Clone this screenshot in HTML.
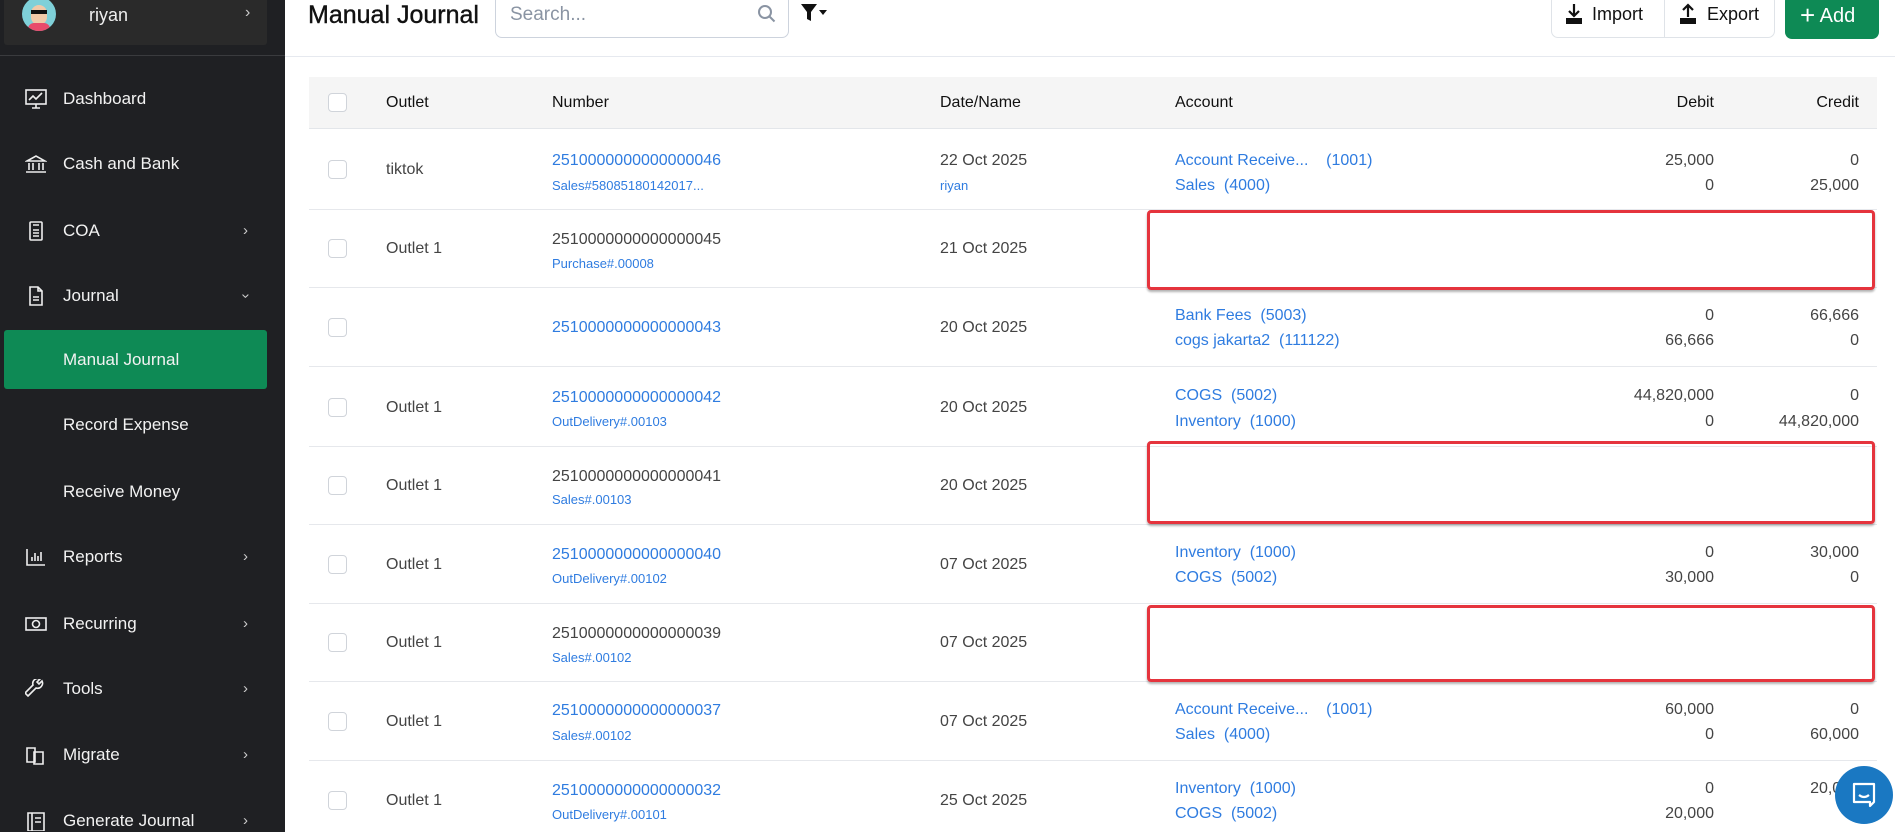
<!DOCTYPE html>
<html><head><meta charset="utf-8"><style>
*{box-sizing:border-box;margin:0;padding:0}
body{width:1895px;height:832px;overflow:hidden;background:#fff;font-family:"Liberation Sans",sans-serif;position:relative}
.sb{position:absolute;left:0;top:0;width:285px;height:832px;background:#1f2023;overflow:hidden}
.user{position:absolute;left:4px;top:0;width:263px;height:45px;background:#2a2a2a;border-radius:0 0 3px 3px}
.av{position:absolute;left:18px;top:-3px;width:34px;height:34px;border-radius:50%;background:#7fd0d8;overflow:hidden}
.divd{position:absolute;left:0;top:55px;width:285px;height:1px;background:#3a3b3e}
.mi{position:absolute;left:0;width:285px;height:30px;color:#f2f2f2;font-size:17px;line-height:30px}
.mi .t{position:absolute;left:63px}
.mi .ic{position:absolute;left:25px;top:5px;width:22px;height:20px}
.mi .ch{position:absolute;left:243px;top:0;font-size:15px;color:#ccc}
.act{position:absolute;left:4px;top:330px;width:263px;height:59px;background:#0e8a55;border-radius:3px}
.abs{position:absolute}
.row{position:absolute;left:309px;width:1568px;border-bottom:1px solid #e6e8ec}
.cb{position:absolute;left:28px;width:19px;height:19px;border:1.5px solid #d0d4da;border-radius:4px;background:#fff}
.c{position:absolute;font-size:16px;color:#444;white-space:nowrap;transform:translateY(3px)}
.l{color:#2f7ce0}
.s{font-size:13px}
.r{text-align:right}
.red{position:absolute;left:1147px;width:728px;border:3px solid #e5343d;border-radius:4px;box-shadow:0 2px 2px rgba(0,0,0,.3)}
</style></head><body>
<div class="sb">
 <div class="user"><div class="av"><div style="position:absolute;left:9px;top:8px;width:16px;height:20px;border-radius:8px;background:#f1c9a8"></div><div style="position:absolute;left:9px;top:13px;width:16px;height:4px;background:#111"></div><div style="position:absolute;left:6px;top:26px;width:22px;height:10px;background:#e84a6b;border-radius:6px 6px 0 0"></div></div>
 <div class="abs" style="left:85px;top:5px;color:#eee;font-size:18px">riyan</div>
 <div class="abs" style="left:241px;top:4px;color:#ccc;font-size:16px">›</div></div>
 <div class="divd"></div>
 <div class="mi" style="top:84px"><svg class="ic" viewBox="0 0 22 20" fill="none" stroke="#eee" stroke-width="1.6"><rect x="1" y="1" width="20" height="14"/><path d="M4 11l4-4 3 3 6-6M7 19h8M11 15v4"/></svg><span class="t">Dashboard</span></div>
 <div class="mi" style="top:149px"><svg class="ic" viewBox="0 0 22 20" fill="none" stroke="#eee" stroke-width="1.6"><path d="M2 7L11 2l9 5zM4 9v7M8 9v7M14 9v7M18 9v7M1 18h20"/></svg><span class="t">Cash and Bank</span></div>
 <div class="mi" style="top:216px"><svg class="ic" viewBox="0 0 22 20" fill="none" stroke="#eee" stroke-width="1.6"><rect x="5" y="1" width="12" height="18" rx="1"/><path d="M8 4h6M8 9h6M8 12h6M8 15h6"/></svg><span class="t">COA</span><span class="ch">›</span></div>
 <div class="mi" style="top:281px"><svg class="ic" viewBox="0 0 22 20" fill="none" stroke="#eee" stroke-width="1.6"><path d="M5 1h8l4 4v14H5zM13 1v4h4M8 11h6M8 14h6"/></svg><span class="t">Journal</span><span class="ch" style="transform:rotate(90deg)">›</span></div>
 <div class="act"></div>
 <div class="mi" style="top:345px"><span class="t">Manual Journal</span></div>
 <div class="mi" style="top:410px"><span class="t">Record Expense</span></div>
 <div class="mi" style="top:477px"><span class="t">Receive Money</span></div>
 <div class="mi" style="top:542px"><svg class="ic" viewBox="0 0 22 20" fill="none" stroke="#eee" stroke-width="1.6"><path d="M2 2v16h18M7 14v-4M10 14V6M13 14v-5M16 14V5"/></svg><span class="t">Reports</span><span class="ch">›</span></div>
 <div class="mi" style="top:609px"><svg class="ic" viewBox="0 0 22 20" fill="none" stroke="#eee" stroke-width="1.6"><rect x="1" y="4" width="20" height="12"/><circle cx="11" cy="10" r="3.5"/></svg><span class="t">Recurring</span><span class="ch">›</span></div>
 <div class="mi" style="top:674px"><svg class="ic" viewBox="0 0 22 20" fill="none" stroke="#eee" stroke-width="1.6"><path d="M3 17l8-8a5 5 0 006-7l-3 3-2-2 3-3a5 5 0 00-7 6l-8 8z"/></svg><span class="t">Tools</span><span class="ch">›</span></div>
 <div class="mi" style="top:740px"><svg class="ic" viewBox="0 0 22 20" fill="none" stroke="#eee" stroke-width="1.6"><path d="M2 3h8v14H2zM9 7h9v12H9z"/></svg><span class="t">Migrate</span><span class="ch">›</span></div>
 <div class="mi" style="top:806px"><svg class="ic" viewBox="0 0 22 20" fill="none" stroke="#eee" stroke-width="1.6"><path d="M3 2h16v18H3zM7 2v18M10 7h6M10 11h6"/></svg><span class="t">Generate Journal</span><span class="ch">›</span></div>
</div>

<div class="abs" style="left:308px;top:1px;font-size:25px;color:#111;-webkit-text-stroke:0.4px #111">Manual Journal</div>
<div class="abs" style="left:495px;top:-6px;width:294px;height:44px;border:1px solid #cdd3dd;border-radius:7px"></div>
<div class="abs" style="left:510px;top:4px;font-size:19px;color:#8a94a3">Search...</div>
<svg class="abs" style="left:757px;top:4px" width="20" height="20" viewBox="0 0 20 20" fill="none" stroke="#8a94a3" stroke-width="2"><circle cx="8" cy="8" r="6"/><path d="M12.5 12.5l5 5"/></svg>
<svg class="abs" style="left:801px;top:4px" width="30" height="18" viewBox="0 0 30 18"><path d="M0 0h16l-6 8v9l-4-2V8z" fill="#111"/><path d="M18 6h8l-4 5z" fill="#111"/></svg>
<div class="abs" style="left:1551px;top:-6px;width:224px;height:44px;border:1px solid #dfe3e8;border-radius:7px"></div>
<div class="abs" style="left:1664px;top:-6px;width:1px;height:44px;background:#dfe3e8"></div>
<svg class="abs" style="left:1565px;top:3px" width="18" height="22" viewBox="0 0 18 22"><path d="M9 1v12M4 8l5 5 5-5" stroke="#111" stroke-width="2.2" fill="none"/><path d="M1 15h16v6H1z" fill="#111"/></svg>
<div class="abs" style="left:1592px;top:4px;font-size:18px;color:#111">Import</div>
<svg class="abs" style="left:1679px;top:3px" width="18" height="22" viewBox="0 0 18 22"><path d="M9 14V2M4 7l5-5 5 5" stroke="#111" stroke-width="2.2" fill="none"/><path d="M1 15h16v6H1z" fill="#111"/></svg>
<div class="abs" style="left:1707px;top:4px;font-size:18px;color:#111">Export</div>
<div class="abs" style="left:1785px;top:-6px;width:94px;height:45px;background:#0e8a55;border-radius:7px;color:#fff;font-size:20px;line-height:42px;padding-left:15px"><span style="font-size:26px;vertical-align:-2px">+</span> Add</div>
<div class="abs" style="left:285px;top:56px;width:1610px;height:1px;background:#e6e9ef"></div>

<div class="abs" style="left:309px;top:77px;width:1568px;height:52px;background:#f5f5f5;border-bottom:1px solid #e3e6ea"></div>
<div class="cb" style="left:328px;top:93px"></div>
<div class="c" style="left:386px;top:91px;color:#111">Outlet</div>
<div class="c" style="left:552px;top:91px;color:#111">Number</div>
<div class="c" style="left:940px;top:91px;color:#111">Date/Name</div>
<div class="c" style="left:1175px;top:91px;color:#111">Account</div>
<div class="c r" style="left:1614px;width:100px;top:91px;color:#111">Debit</div>
<div class="c r" style="left:1759px;width:100px;top:91px;color:#111">Credit</div>

<div class="row" style="top:129px;height:81px"></div>
<div class="row" style="top:210px;height:78px"></div>
<div class="row" style="top:288px;height:79px"></div>
<div class="row" style="top:367px;height:80px"></div>
<div class="row" style="top:447px;height:78px"></div>
<div class="row" style="top:525px;height:79px"></div>
<div class="row" style="top:604px;height:78px"></div>
<div class="row" style="top:682px;height:79px"></div>

<div class="cb" style="left:328px;top:160px"></div>
<div class="c" style="left:386px;top:158px">tiktok</div>
<div class="c l" style="left:552px;top:149px">2510000000000000046</div>
<div class="c l s" style="left:552px;top:175px">Sales#58085180142017...</div>
<div class="c" style="left:940px;top:149px">22 Oct 2025</div>
<div class="c l s" style="left:940px;top:175px">riyan</div>
<div class="c l" style="left:1175px;top:149px">Account Receive...&nbsp;&nbsp;&nbsp;&nbsp;(1001)</div>
<div class="c l" style="left:1175px;top:174px">Sales&nbsp;&nbsp;(4000)</div>
<div class="c r" style="left:1564px;width:150px;top:149px">25,000</div>
<div class="c r" style="left:1564px;width:150px;top:174px">0</div>
<div class="c r" style="left:1709px;width:150px;top:149px">0</div>
<div class="c r" style="left:1709px;width:150px;top:174px">25,000</div>

<div class="cb" style="left:328px;top:239px"></div>
<div class="c" style="left:386px;top:237px">Outlet 1</div>
<div class="c" style="left:552px;top:228px">2510000000000000045</div>
<div class="c l s" style="left:552px;top:253px">Purchase#.00008</div>
<div class="c" style="left:940px;top:237px">21 Oct 2025</div>
<div class="red" style="top:210px;height:80px"></div>

<div class="cb" style="left:328px;top:318px"></div>
<div class="c l" style="left:552px;top:316px">2510000000000000043</div>
<div class="c" style="left:940px;top:316px">20 Oct 2025</div>
<div class="c l" style="left:1175px;top:304px">Bank Fees&nbsp;&nbsp;(5003)</div>
<div class="c l" style="left:1175px;top:329px">cogs jakarta2&nbsp;&nbsp;(111122)</div>
<div class="c r" style="left:1564px;width:150px;top:304px">0</div>
<div class="c r" style="left:1564px;width:150px;top:329px">66,666</div>
<div class="c r" style="left:1709px;width:150px;top:304px">66,666</div>
<div class="c r" style="left:1709px;width:150px;top:329px">0</div>

<div class="cb" style="left:328px;top:398px"></div>
<div class="c" style="left:386px;top:396px">Outlet 1</div>
<div class="c l" style="left:552px;top:386px">2510000000000000042</div>
<div class="c l s" style="left:552px;top:411px">OutDelivery#.00103</div>
<div class="c" style="left:940px;top:396px">20 Oct 2025</div>
<div class="c l" style="left:1175px;top:384px">COGS&nbsp;&nbsp;(5002)</div>
<div class="c l" style="left:1175px;top:410px">Inventory&nbsp;&nbsp;(1000)</div>
<div class="c r" style="left:1564px;width:150px;top:384px">44,820,000</div>
<div class="c r" style="left:1564px;width:150px;top:410px">0</div>
<div class="c r" style="left:1709px;width:150px;top:384px">0</div>
<div class="c r" style="left:1709px;width:150px;top:410px">44,820,000</div>

<div class="cb" style="left:328px;top:476px"></div>
<div class="c" style="left:386px;top:474px">Outlet 1</div>
<div class="c" style="left:552px;top:465px">2510000000000000041</div>
<div class="c l s" style="left:552px;top:489px">Sales#.00103</div>
<div class="c" style="left:940px;top:474px">20 Oct 2025</div>
<div class="red" style="top:441px;height:83px"></div>

<div class="cb" style="left:328px;top:555px"></div>
<div class="c" style="left:386px;top:553px">Outlet 1</div>
<div class="c l" style="left:552px;top:543px">2510000000000000040</div>
<div class="c l s" style="left:552px;top:568px">OutDelivery#.00102</div>
<div class="c" style="left:940px;top:553px">07 Oct 2025</div>
<div class="c l" style="left:1175px;top:541px">Inventory&nbsp;&nbsp;(1000)</div>
<div class="c l" style="left:1175px;top:566px">COGS&nbsp;&nbsp;(5002)</div>
<div class="c r" style="left:1564px;width:150px;top:541px">0</div>
<div class="c r" style="left:1564px;width:150px;top:566px">30,000</div>
<div class="c r" style="left:1709px;width:150px;top:541px">30,000</div>
<div class="c r" style="left:1709px;width:150px;top:566px">0</div>

<div class="cb" style="left:328px;top:633px"></div>
<div class="c" style="left:386px;top:631px">Outlet 1</div>
<div class="c" style="left:552px;top:622px">2510000000000000039</div>
<div class="c l s" style="left:552px;top:647px">Sales#.00102</div>
<div class="c" style="left:940px;top:631px">07 Oct 2025</div>
<div class="red" style="top:605px;height:77px"></div>

<div class="cb" style="left:328px;top:712px"></div>
<div class="c" style="left:386px;top:710px">Outlet 1</div>
<div class="c l" style="left:552px;top:699px">2510000000000000037</div>
<div class="c l s" style="left:552px;top:725px">Sales#.00102</div>
<div class="c" style="left:940px;top:710px">07 Oct 2025</div>
<div class="c l" style="left:1175px;top:698px">Account Receive...&nbsp;&nbsp;&nbsp;&nbsp;(1001)</div>
<div class="c l" style="left:1175px;top:723px">Sales&nbsp;&nbsp;(4000)</div>
<div class="c r" style="left:1564px;width:150px;top:698px">60,000</div>
<div class="c r" style="left:1564px;width:150px;top:723px">0</div>
<div class="c r" style="left:1709px;width:150px;top:698px">0</div>
<div class="c r" style="left:1709px;width:150px;top:723px">60,000</div>

<div class="cb" style="left:328px;top:791px"></div>
<div class="c" style="left:386px;top:789px">Outlet 1</div>
<div class="c l" style="left:552px;top:779px">2510000000000000032</div>
<div class="c l s" style="left:552px;top:804px">OutDelivery#.00101</div>
<div class="c" style="left:940px;top:789px">25 Oct 2025</div>
<div class="c l" style="left:1175px;top:777px">Inventory&nbsp;&nbsp;(1000)</div>
<div class="c l" style="left:1175px;top:802px">COGS&nbsp;&nbsp;(5002)</div>
<div class="c r" style="left:1564px;width:150px;top:777px">0</div>
<div class="c r" style="left:1564px;width:150px;top:802px">20,000</div>
<div class="c r" style="left:1709px;width:150px;top:777px">20,000</div>

<div class="abs" style="left:1835px;top:766px;width:58px;height:58px;border-radius:50%;background:#1a78c2"></div>
<svg class="abs" style="left:1851px;top:781px" width="26" height="28" viewBox="0 0 26 28" fill="none" stroke="#fff" stroke-width="2.2"><path d="M3 3h20v18l-4 4v-4H3z" stroke-linejoin="round"/><path d="M8 14q5 4 10 0"/></svg>
</body></html>
